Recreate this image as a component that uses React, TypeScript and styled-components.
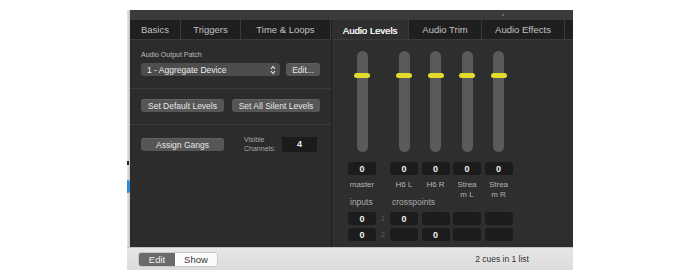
import React from "react";
import styled, { createGlobalStyle } from "styled-components";

const GlobalStyle = createGlobalStyle`
  body {
    margin: 0;
    background: #ffffff;
    font-family: "Liberation Sans", Arial, sans-serif;
  }
`;

const cols = "28px 7px 28px 28px 28px 28px";

const Window = styled.div`
  margin: 10px 0 0 127px;
  width: 446px;
  display: flex;
  flex-direction: column;
`;

const Upper = styled.div`
  display: flex;
  height: 237px;
`;

const EdgeStrip = styled.div`
  position: relative;
  width: 3px;
  background: linear-gradient(90deg, #e6e6e6, #c4c4c4);

  &::before {
    content: "";
    position: absolute;
    left: 0;
    top: 151px;
    width: 2px;
    height: 4px;
    background: #222;
  }

  &::after {
    content: "";
    position: absolute;
    left: 0;
    top: 170px;
    width: 3px;
    height: 13px;
    background: #2f8be0;
    border-radius: 0 2px 2px 0;
  }
`;

const Main = styled.div`
  flex: 1;
  display: flex;
  flex-direction: column;
  min-width: 0;
`;

const TitleStrip = styled.div`
  position: relative;
  height: 10px;
  background: #3b3b3b;

  &::after {
    content: "";
    position: absolute;
    left: 372px;
    top: 4px;
    width: 2px;
    height: 2px;
    border-radius: 1px;
    background: #777;
  }
`;

const Panels = styled.div`
  flex: 1;
  display: flex;
`;

const LeftPanel = styled.div`
  width: 201px;
  background: #2c2c2c;
  display: flex;
  flex-direction: column;
`;

const RightPanel = styled.div`
  flex: 1;
  min-width: 0;
  background: #2e2e2e;
  border-left: 1px solid #1e1e1e;
  display: flex;
  flex-direction: column;
`;

const TabBar = styled.div`
  display: flex;
  height: 20px;
  background: #1f1f1f;
  border-bottom: 1px solid #3a3a3a;
  box-sizing: border-box;
  overflow: hidden;
`;

const Tab = styled.div<{ $w: number; $active?: boolean }>`
  flex: 0 0 ${(p) => p.$w}px;
  box-sizing: border-box;
  display: flex;
  align-items: center;
  justify-content: center;
  font-size: 9.5px;
  color: ${(p) => (p.$active ? "#f4f4f4" : "#c2c2c2")};
  text-shadow: ${(p) => (p.$active ? "0.3px 0 0 #f4f4f4" : "none")};
  background: ${(p) => (p.$active ? "#2e2e2e" : "transparent")};
  border-right: 1px solid #3a3a3a;
  margin-bottom: ${(p) => (p.$active ? "-1px" : "0")};
  white-space: nowrap;
`;

const Section = styled.div<{ $h: number }>`
  height: ${(p) => p.$h}px;
  box-sizing: border-box;
  padding: 10px 11px 0;
  border-bottom: 1px solid #3b3b3b;
`;

const LastSection = styled.div`
  flex: 1;
  padding: 10px 11px 0;
`;

const SmallLabel = styled.div`
  font-size: 7px;
  line-height: 10px;
  height: 10px;
  color: #bdbdbd;
  margin-bottom: 3px;
`;

const Row = styled.div<{ $gap: number }>`
  display: flex;
  align-items: center;
  gap: ${(p) => p.$gap}px;
`;

const Select = styled.div`
  width: 139px;
  height: 13px;
  box-sizing: border-box;
  border-radius: 3px;
  background: #4d4d4d;
  color: #ececec;
  font-size: 8.5px;
  display: flex;
  align-items: center;
  justify-content: space-between;
  padding: 0 4px 0 6px;
`;

const Button = styled.div<{ $w: number }>`
  flex: 0 0 ${(p) => p.$w}px;
  height: 13px;
  box-sizing: border-box;
  border-radius: 3px;
  background: #565656;
  border-top: 1px solid #616161;
  color: #e6e6e6;
  font-size: 8.5px;
  display: flex;
  align-items: center;
  justify-content: center;
  white-space: nowrap;
`;

const TwoLineLabel = styled.div`
  flex: 0 0 38px;
  font-size: 7px;
  line-height: 9px;
  color: #a8a8a8;
`;

const NumberInput = styled.div`
  width: 35px;
  height: 15px;
  background: #1b1b1b;
  color: #f0f0f0;
  font-size: 9px;
  font-weight: bold;
  display: flex;
  align-items: center;
  justify-content: center;
`;

const MixerBody = styled.div`
  padding: 11px 0 0 16px;
  display: flex;
  flex-direction: column;
`;

const Grid = styled.div<{ $h: number; $mt: number }>`
  display: grid;
  grid-template-columns: ${cols};
  column-gap: 3.5px;
  height: ${(p) => p.$h}px;
  margin-top: ${(p) => p.$mt}px;
  align-items: start;
`;

const FaderCell = styled.div<{ $col: number }>`
  grid-column: ${(p) => p.$col};
  position: relative;
  height: 101px;
  display: flex;
  justify-content: center;
`;

const Track = styled.div`
  width: 11px;
  height: 101px;
  border-radius: 6px;
  background: #5a5a5a;
`;

const Handle = styled.div`
  position: absolute;
  top: 22px;
  left: 50%;
  margin-left: -8px;
  width: 16px;
  height: 5px;
  border-radius: 3px;
  background: #e3dc2b;
`;

const ValueBox = styled.div<{ $col: number }>`
  grid-column: ${(p) => p.$col};
  height: 13px;
  border-radius: 3px;
  background: #1c1c1c;
  color: #f0f0f0;
  font-size: 9px;
  font-weight: bold;
  display: flex;
  align-items: center;
  justify-content: center;
`;

const ChannelName = styled.div<{ $col: number }>`
  grid-column: ${(p) => p.$col};
  font-size: 8px;
  line-height: 10px;
  color: #b4b4b4;
  text-align: center;
  white-space: nowrap;
`;

const GroupLabel = styled.div<{ $col: string }>`
  grid-column: ${(p) => p.$col};
  font-size: 8.5px;
  line-height: 12px;
  color: #aaaaaa;
  padding-left: 2px;
  white-space: nowrap;
`;

const RowNum = styled.div`
  grid-column: 2;
  font-size: 7px;
  line-height: 13px;
  color: #5f5f5f;
  text-align: center;
`;

const BottomBar = styled.div`
  height: 23px;
  box-sizing: border-box;
  background: linear-gradient(#e6e6e6, #dcdcdc);
  border-top: 1px solid #c3c3c3;
  display: flex;
  align-items: center;
  padding: 0 44px 0 11px;
`;

const Segmented = styled.div`
  display: flex;
  height: 13px;
  border-radius: 3px;
  overflow: hidden;
  border: 1px solid #c8c8c8;
`;

const Segment = styled.div<{ $w: number; $on?: boolean }>`
  width: ${(p) => p.$w}px;
  display: flex;
  align-items: center;
  justify-content: center;
  font-size: 9.5px;
  background: ${(p) => (p.$on ? "#6a6a6a" : "#fbfbfb")};
  color: ${(p) => (p.$on ? "#efefef" : "#3a3a3a")};
`;

const Status = styled.div`
  margin-left: auto;
  font-size: 8.5px;
  color: #333;
`;

const channels = [
  { col: 3, name: ["H6 L"] },
  { col: 4, name: ["H6 R"] },
  { col: 5, name: ["Strea", "m L"] },
  { col: 6, name: ["Strea", "m R"] },
];

function UpDown() {
  return (
    <svg width="6" height="10" viewBox="0 0 6 10">
      <path d="M1 4 L3 1.5 L5 4" stroke="#e0e0e0" strokeWidth="1.2" fill="none" />
      <path d="M1 6 L3 8.5 L5 6" stroke="#e0e0e0" strokeWidth="1.2" fill="none" />
    </svg>
  );
}

export default function App() {
  return (
    <>
      <GlobalStyle />
      <Window>
        <Upper>
          <EdgeStrip />
          <Main>
            <TitleStrip />
            <Panels>
              <LeftPanel>
                <TabBar>
                  <Tab $w={51}>Basics</Tab>
                  <Tab $w={60}>Triggers</Tab>
                  <Tab $w={90}>Time &amp; Loops</Tab>
                </TabBar>
                <Section $h={49}>
                  <SmallLabel>Audio Output Patch</SmallLabel>
                  <Row $gap={6}>
                    <Select>
                      <span>1 - Aggregate Device</span>
                      <UpDown />
                    </Select>
                    <Button $w={34}>Edit...</Button>
                  </Row>
                </Section>
                <Section $h={36}>
                  <Row $gap={8}>
                    <Button $w={83}>Set Default Levels</Button>
                    <Button $w={88}>Set All Silent Levels</Button>
                  </Row>
                </Section>
                <LastSection>
                  <Row $gap={20}>
                    <Button $w={83}>Assign Gangs</Button>
                    <Row $gap={0}>
                      <TwoLineLabel>
                        Visible
                        <br />
                        Channels:
                      </TwoLineLabel>
                      <NumberInput>4</NumberInput>
                    </Row>
                  </Row>
                </LastSection>
              </LeftPanel>
              <RightPanel>
                <TabBar>
                  <Tab $w={77} $active>
                    Audio Levels
                  </Tab>
                  <Tab $w={73}>Audio Trim</Tab>
                  <Tab $w={83}>Audio Effects</Tab>
                  <Tab $w={40} />
                </TabBar>
                <MixerBody>
                  <Grid $h={101} $mt={0}>
                    {[1, 3, 4, 5, 6].map((c) => (
                      <FaderCell key={c} $col={c}>
                        <Track />
                        <Handle />
                      </FaderCell>
                    ))}
                  </Grid>
                  <Grid $h={13} $mt={10}>
                    {[1, 3, 4, 5, 6].map((c) => (
                      <ValueBox key={c} $col={c}>
                        0
                      </ValueBox>
                    ))}
                  </Grid>
                  <Grid $h={16} $mt={5}>
                    <ChannelName $col={1}>master</ChannelName>
                    {channels.map((ch) => (
                      <ChannelName key={ch.col} $col={ch.col}>
                        {ch.name.map((line) => (
                          <div key={line}>{line}</div>
                        ))}
                      </ChannelName>
                    ))}
                  </Grid>
                  <Grid $h={12} $mt={0}>
                    <GroupLabel $col="1">inputs</GroupLabel>
                    <GroupLabel $col="3 / 7">crosspoints</GroupLabel>
                  </Grid>
                  <Grid $h={13} $mt={4}>
                    <ValueBox $col={1}>0</ValueBox>
                    <RowNum>1</RowNum>
                    <ValueBox $col={3}>0</ValueBox>
                    <ValueBox $col={4} />
                    <ValueBox $col={5} />
                    <ValueBox $col={6} />
                  </Grid>
                  <Grid $h={13} $mt={3}>
                    <ValueBox $col={1}>0</ValueBox>
                    <RowNum>2</RowNum>
                    <ValueBox $col={3} />
                    <ValueBox $col={4}>0</ValueBox>
                    <ValueBox $col={5} />
                    <ValueBox $col={6} />
                  </Grid>
                </MixerBody>
              </RightPanel>
            </Panels>
          </Main>
        </Upper>
        <BottomBar>
          <Segmented>
            <Segment $w={36} $on>
              Edit
            </Segment>
            <Segment $w={42}>Show</Segment>
          </Segmented>
          <Status>2 cues in 1 list</Status>
        </BottomBar>
      </Window>
    </>
  );
}
